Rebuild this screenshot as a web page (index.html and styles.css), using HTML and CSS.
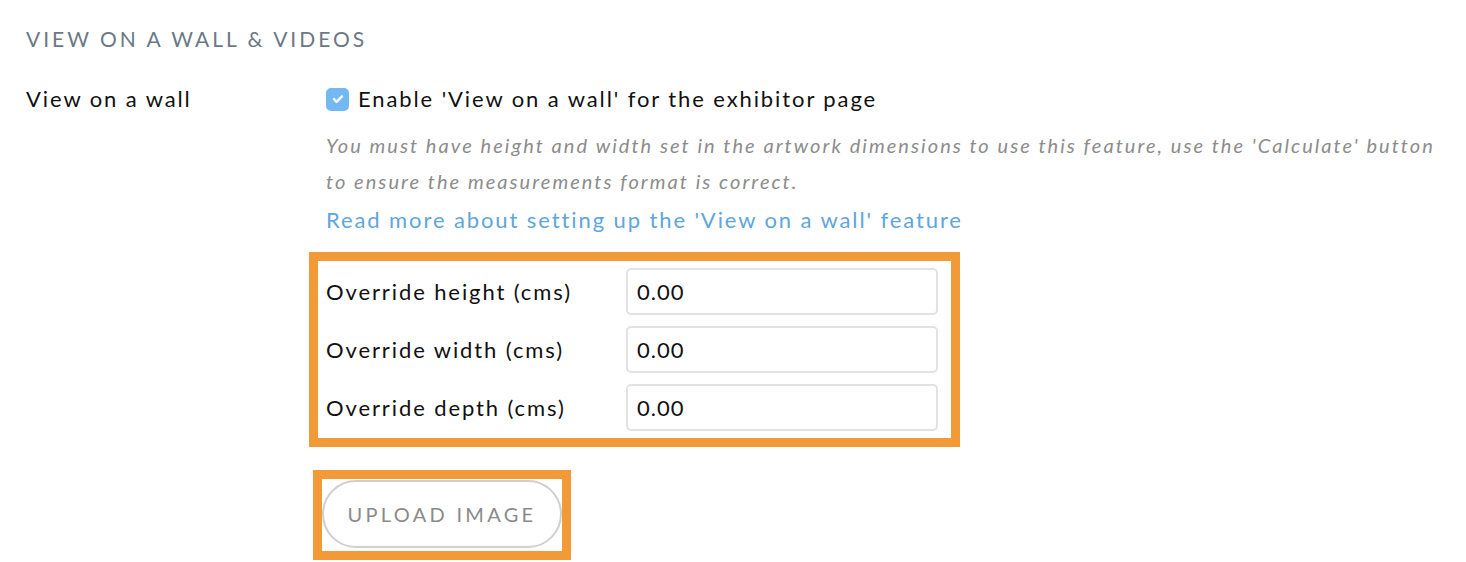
FILE: index.html
```html
<!DOCTYPE html>
<html lang="en">
<head>
    <meta charset="UTF-8">
    <meta name="viewport" content="width=device-width, initial-scale=1.0">
    <link rel="stylesheet" href="styles.css">
    <title>View on a wall &amp; videos</title>
</head>
<body>
    <section class="settings">
        <h2 class="section-title">View on a wall &amp; videos</h2>

        <div class="row">
            <div class="row-label">View on a wall</div>
            <div class="row-body">
                <label class="check">
                    <span class="check-box">
                        <svg width="14" height="14" viewBox="0 0 14 14"><path d="M3 7.2l2.6 2.6L11 4.4" fill="none" stroke="#fff" stroke-width="2.4" stroke-linecap="round" stroke-linejoin="round"/></svg>
                    </span>
                    Enable 'View on a wall' for the exhibitor page
                </label>
                <p class="hint">You must have height and width set in the artwork dimensions to use this feature, use the 'Calculate' button to ensure the measurements format is correct.</p>
                <a class="more-link" href="#">Read more about setting up the 'View on a wall' feature</a>

                <div class="highlight fields">
                    <div class="field">
                        <label for="oh">Override height (cms)</label>
                        <input type="text" id="oh" value="0.00">
                    </div>
                    <div class="field">
                        <label for="ow">Override width (cms)</label>
                        <input type="text" id="ow" value="0.00">
                    </div>
                    <div class="field">
                        <label for="od">Override depth (cms)</label>
                        <input type="text" id="od" value="0.00">
                    </div>
                </div>

                <div class="highlight upload">
                    <button type="button" class="upload-btn">Upload image</button>
                </div>
            </div>
        </div>
    </section>
</body>
</html>
```

FILE: styles.css
```css
body {
    margin: 0;
    font-family: Lato, "Open Sans", Arial, sans-serif;
    color: #111;
    background: #fff;
}

.settings {
    padding: 25px 0 0 26px;
}

.section-title {
    margin: 0;
    font-size: 21px;
    font-weight: 400;
    letter-spacing: 3px;
    text-transform: uppercase;
    color: #6b7885;
    line-height: 28px;
}

.row {
    display: flex;
    margin-top: 31px;
}

.row-label {
    width: 300px;
    flex-shrink: 0;
    font-size: 22px;
    letter-spacing: 1.9px;
    line-height: 30px;
}

.row-body {
    flex: 1;
    padding-right: 14px;
}

.check {
    display: flex;
    align-items: center;
    gap: 9px;
    font-size: 22px;
    letter-spacing: 1.9px;
    line-height: 30px;
}

.check-box {
    width: 23px;
    height: 23px;
    border-radius: 5px;
    background: #74b8f2;
    display: flex;
    align-items: center;
    justify-content: center;
}

.hint {
    margin: 13px 0 0;
    font-size: 20px;
    font-style: italic;
    letter-spacing: 2.05px;
    line-height: 36px;
    color: #8c8c8c;
}

.more-link {
    display: block;
    font-size: 22px;
    letter-spacing: 1.9px;
    line-height: 30px;
    color: #5ea6de;
    text-decoration: none;
    margin-top: 6px;
}

.highlight {
    border: 9px solid #f29a38;
    margin-left: -17px;
    box-sizing: border-box;
}

.fields {
    width: 651px;
    margin-top: 17px;
    padding: 7px 13px 7px 8px;
    display: flex;
    flex-direction: column;
    gap: 11px;
}

.field {
    display: flex;
    align-items: center;
}

.field label {
    width: 300px;
    font-size: 22px;
    letter-spacing: 1.9px;
}

.field input {
    width: 312px;
    height: 47px;
    box-sizing: border-box;
    border: 2px solid #e2e2e2;
    border-radius: 5px;
    padding: 0 9px;
    font-family: inherit;
    font-size: 22px;
    letter-spacing: 1px;
    color: #111;
}

.upload {
    width: 258px;
    margin-top: 23px;
    margin-left: -13px;
    padding: 1px 0 3px 0;
}

.upload-btn {
    width: 240px;
    height: 68px;
    border: 2px solid #cfcfcf;
    border-radius: 34px;
    background: #fff;
    font-family: inherit;
    font-size: 20px;
    letter-spacing: 3.3px;
    text-transform: uppercase;
    color: #8a8a8a;
    cursor: pointer;
}
```
